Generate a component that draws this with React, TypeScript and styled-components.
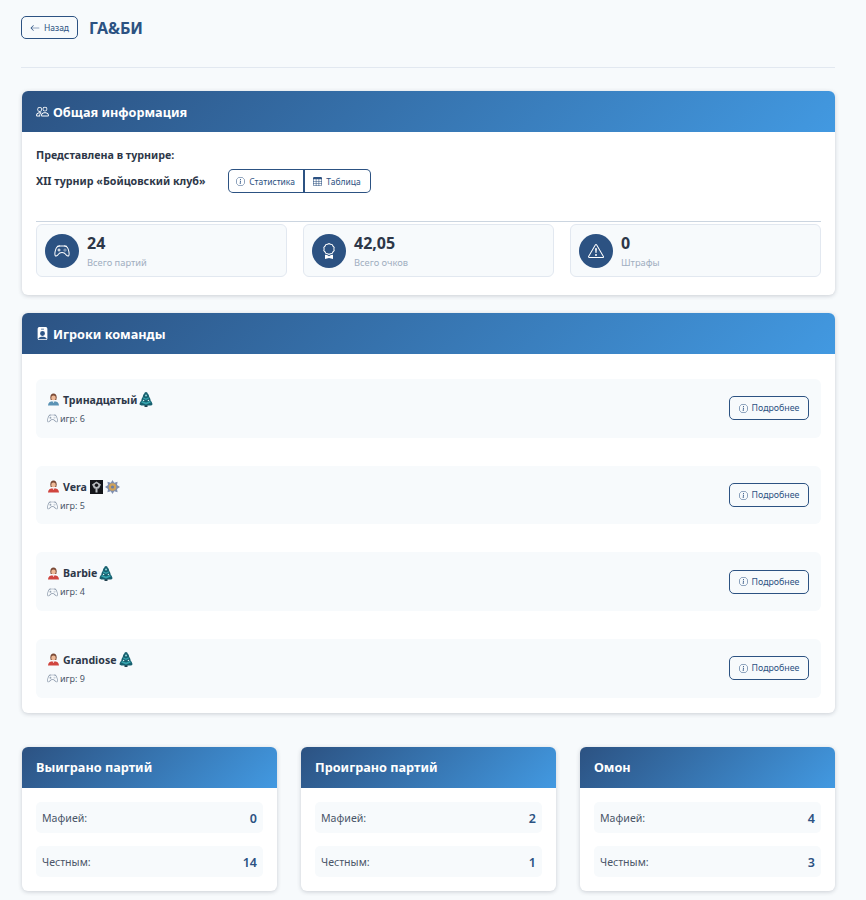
import styled, { createGlobalStyle } from 'styled-components';
import {
  BsArrowLeft,
  BsAward,
  BsController,
  BsExclamationTriangle,
  BsInfoCircle,
  BsPeople,
  BsPersonBadgeFill,
  BsTable,
} from 'react-icons/bs';

const GlobalStyle = createGlobalStyle`
  html, body {
    margin: 0;
    background: #f7fafc;
  }

  body {
    font-family: "Noto Sans", "Open Sans", sans-serif;
    color: #2d3748;
  }

  * {
    box-sizing: border-box;
  }
`;

const Page = styled.div`
  width: 866px;
  height: 900px;
  overflow: hidden;
  padding: 16px 31px 0 21px;
`;

const TopBar = styled.header`
  display: flex;
  align-items: flex-start;
  gap: 11px;
  height: 52px;
  border-bottom: 1px solid #e2e8f0;
  margin-bottom: 23px;
`;

const BackButton = styled.button`
  display: flex;
  align-items: center;
  justify-content: center;
  gap: 4px;
  width: 57px;
  height: 23px;
  padding: 0;
  font: inherit;
  font-size: 8.5px;
  color: #2c5282;
  background: transparent;
  border: 1px solid #2c5282;
  border-radius: 5px;
`;

const Title = styled.h1`
  margin: 0;
  padding-top: 1px;
  font-size: 16px;
  line-height: 23px;
  font-weight: 700;
  color: #2c5282;
`;

const Card = styled.section<{ $gap?: number }>`
  margin-left: 1px;
  margin-bottom: ${(p) => p.$gap ?? 0}px;
  background: #fff;
  border-radius: 6px;
  box-shadow: 0 1px 4px rgba(45, 55, 72, 0.22);
  overflow: hidden;
`;

const CardHeader = styled.h2`
  display: flex;
  align-items: center;
  gap: 4px;
  height: 41px;
  margin: 0;
  padding: 0 14px;
  font-size: 12.7px;
  font-weight: 700;
  color: #fff;
  background: linear-gradient(135deg, #2c5282, #4299e1);
`;

const InfoBody = styled.div`
  padding: 16px 14px 18px;
`;

const BoldLine = styled.div`
  font-size: 10.7px;
  line-height: 15px;
  font-weight: 700;
`;

const TournamentRow = styled.div`
  display: flex;
  align-items: center;
  gap: 22px;
  margin-top: 6px;
  padding-bottom: 28px;
  border-bottom: 1px solid #cbd5e0;
`;

const ButtonGroup = styled.div`
  display: flex;
`;

const GroupButton = styled.button<{ $first?: boolean }>`
  display: flex;
  align-items: center;
  justify-content: center;
  gap: 4px;
  width: ${(p) => (p.$first ? 77 : 66)}px;
  height: 24px;
  padding: 0;
  font: inherit;
  font-size: 8.5px;
  color: #2c5282;
  background: transparent;
  border: 1px solid #2c5282;
  border-left-width: ${(p) => (p.$first ? 1 : 0)}px;
  border-right-width: ${(p) => (p.$first ? 2 : 1)}px;
  border-radius: ${(p) => (p.$first ? '5px 0 0 5px' : '0 5px 5px 0')};
`;

const StatGrid = styled.div`
  display: grid;
  grid-template-columns: repeat(3, 251px);
  gap: 16px;
  margin-top: 2px;
`;

const StatCard = styled.div`
  display: flex;
  align-items: center;
  gap: 8px;
  height: 53px;
  padding: 0 8px;
  background: #f7fafc;
  border: 1px solid #e2e8f0;
  border-radius: 6px;
`;

const StatIcon = styled.div`
  display: flex;
  align-items: center;
  justify-content: center;
  width: 34px;
  height: 34px;
  color: #fff;
  background: #2c5282;
  border-radius: 50%;
`;

const StatValue = styled.div`
  font-size: 16px;
  line-height: 20px;
  font-weight: 700;
  color: #2d3748;
`;

const StatLabel = styled.div`
  font-size: 9.3px;
  line-height: 13px;
  margin-top: 3px;
  color: #a0aec0;
`;

const PlayersBody = styled.div`
  display: flex;
  flex-direction: column;
  gap: 28px;
  padding: 25px 14px 15px;
`;

const PlayerRow = styled.div`
  display: flex;
  align-items: center;
  justify-content: space-between;
  height: 58.7px;
  padding: 0 12px 0 11px;
  background: #f7fafc;
  border-radius: 6px;
`;

const PlayerName = styled.div`
  display: flex;
  align-items: center;
  gap: 2px;
  height: 16px;
  font-size: 10.6px;
  font-weight: 700;
  color: #2d3748;
`;

const PlayerGames = styled.div`
  display: flex;
  align-items: center;
  gap: 2px;
  margin-top: 5px;
  font-size: 9px;
  line-height: 12px;
  color: #4a5568;

  svg {
    color: #8795a8;
  }
`;

const DetailsButton = styled.button`
  display: flex;
  align-items: center;
  justify-content: center;
  gap: 4px;
  width: 80px;
  height: 24px;
  padding: 0;
  font: inherit;
  font-size: 8.8px;
  color: #2c5282;
  background: transparent;
  border: 1px solid #2c5282;
  border-radius: 5px;
`;

const BottomGrid = styled.div`
  display: grid;
  grid-template-columns: repeat(3, 255px);
  gap: 24px;
  margin: 34px 0 0 1px;
`;

const BottomCard = styled(Card)`
  margin: 0;
  height: 144px;
`;

const ScoreBody = styled.div`
  display: flex;
  flex-direction: column;
  gap: 13px;
  padding: 14px;
`;

const ScoreRow = styled.div`
  display: flex;
  align-items: center;
  justify-content: space-between;
  height: 31px;
  padding: 2px 6px 0;
  background: #f7fafc;
  border-radius: 5px;
  font-size: 10.6px;
  color: #4a5568;
`;

const ScoreValue = styled.span`
  font-size: 12.5px;
  font-weight: 600;
  color: #2c5282;
`;

const PersonSvg = styled.svg`
  margin-right: 1px;
`;

const DarkSvg = styled.svg`
  margin-left: 1px;
`;

function Tree() {
  return (
    <svg width="14" height="15" viewBox="0 0 14 15">
      <rect x="5.5" y="12.8" width="3" height="2.2" fill="#24414f" />
      <path
        d="M7 0C8 0 8.600.8 8.600 1.600 9.800 2.600 10.200 4 10.200 5 11.200 6 11.600 7.400 11.600 8.400 12.800 9.600 13.400 11 13.400 12.200 13.400 13 12.600 13.400 12 13.400H2C1.400 13.400.6 13 .6 12.200.6 11 1.200 9.600 2.400 8.400 2.400 7.400 2.800 6 3.800 5 3.800 4 4.200 2.600 5.400 1.600 5.400.8 6 0 7 0Z"
        fill="#17606f"
      />
      <path d="M4.500 5.200 7 6.400 9.500 5.200 9.900 6.600 7 8 4.100 6.600ZM3 9 7 10.600 11 9 11.800 10.600 7 12.400 2.200 10.600Z" fill="#35a3ad" />
      <circle cx="7" cy="3.400" r="1" fill="#8fd5da" />
      <circle cx="4.600" cy="8.400" r=".7" fill="#d8f1f2" />
      <circle cx="9.400" cy="8.400" r=".7" fill="#d8f1f2" />
    </svg>
  );
}

function Person({ color }: { color: string }) {
  return (
    <PersonSvg width="13" height="13" viewBox="0 0 13 13">
      <path d="M1 12.500C1 9.600 2.800 8.200 6.500 8.200S12 9.600 12 12.500Z" fill={color} />
      <path d="M3.300 4.600C3.300 1.800 4.600.6 6.500.6S9.700 1.800 9.700 4.600L9.300 7H3.700Z" fill="#7a4a36" />
      <circle cx="6.500" cy="4.900" r="2.300" fill="#eeb997" />
      <path d="M5.400 8.200 6.500 10 7.600 8.200Z" fill="#fff" />
    </PersonSvg>
  );
}

function DarkBadge() {
  return (
    <DarkSvg width="13" height="14" viewBox="0 0 13 14">
      <rect width="13" height="14" fill="#14161a" />
      <path d="M6.500 1.500 11 4.500 9 8.500H7.500V12.500H5.500V8.500H4L2 4.500Z" fill="#b4b8bc" />
      <circle cx="6.500" cy="5.200" r="1.700" fill="#14161a" />
    </DarkSvg>
  );
}

function StarBadge() {
  return (
    <svg width="15" height="14" viewBox="0 0 15 14">
      <path
        d="M7.500 0 9.200 2.800 12.600 1.800 12 5 15 7 12 9 12.600 12.200 9.200 11.200 7.500 14 5.800 11.200 2.400 12.200 3 9 0 7 3 5 2.400 1.800 5.800 2.800Z"
        fill="#7f8fb0"
      />
      <circle cx="7.500" cy="7" r="3.800" fill="#cfa25a" />
      <circle cx="7.500" cy="7" r="1.600" fill="#6c7da3" />
    </svg>
  );
}

const players = [
  { name: 'Тринадцатый', color: '#5b93b5', games: 6, badges: [<Tree key="t" />] },
  { name: 'Vera', color: '#d0453f', games: 5, badges: [<DarkBadge key="d" />, <StarBadge key="s" />] },
  { name: 'Barbie', color: '#d0453f', games: 4, badges: [<Tree key="t" />] },
  { name: 'Grandiose', color: '#d0453f', games: 9, badges: [<Tree key="t" />] },
];

const stats = [
  { value: '24', label: 'Всего партий', icon: <BsController size={16} /> },
  { value: '42,05', label: 'Всего очков', icon: <BsAward size={16} /> },
  { value: '0', label: 'Штрафы', icon: <BsExclamationTriangle size={16} /> },
];

const scores = [
  { title: 'Выиграно партий', mafia: 0, honest: 14 },
  { title: 'Проиграно партий', mafia: 2, honest: 1 },
  { title: 'Омон', mafia: 4, honest: 3 },
];

export default function App() {
  return (
    <Page>
      <GlobalStyle />
      <TopBar>
        <BackButton>
          <BsArrowLeft size={10} />
          Назад
        </BackButton>
        <Title>ГА&amp;БИ</Title>
      </TopBar>

      <Card $gap={18}>
        <CardHeader>
          <BsPeople size={13} />
          Общая информация
        </CardHeader>
        <InfoBody>
          <BoldLine>Представлена в турнире:</BoldLine>
          <TournamentRow>
            <BoldLine>XII турнир «Бойцовский клуб»</BoldLine>
            <ButtonGroup>
              <GroupButton $first>
                <BsInfoCircle size={9} />
                Статистика
              </GroupButton>
              <GroupButton>
                <BsTable size={9} />
                Таблица
              </GroupButton>
            </ButtonGroup>
          </TournamentRow>
          <StatGrid>
            {stats.map((s) => (
              <StatCard key={s.label}>
                <StatIcon>{s.icon}</StatIcon>
                <div>
                  <StatValue>{s.value}</StatValue>
                  <StatLabel>{s.label}</StatLabel>
                </div>
              </StatCard>
            ))}
          </StatGrid>
        </InfoBody>
      </Card>

      <Card>
        <CardHeader>
          <BsPersonBadgeFill size={13} />
          Игроки команды
        </CardHeader>
        <PlayersBody>
          {players.map((p) => (
            <PlayerRow key={p.name}>
              <div>
                <PlayerName>
                  <Person color={p.color} />
                  {p.name}
                  {p.badges}
                </PlayerName>
                <PlayerGames>
                  <BsController size={11} />
                  игр: {p.games}
                </PlayerGames>
              </div>
              <DetailsButton>
                <BsInfoCircle size={9} />
                Подробнее
              </DetailsButton>
            </PlayerRow>
          ))}
        </PlayersBody>
      </Card>

      <BottomGrid>
        {scores.map((s) => (
          <BottomCard key={s.title}>
            <CardHeader>{s.title}</CardHeader>
            <ScoreBody>
              <ScoreRow>
                Мафией:
                <ScoreValue>{s.mafia}</ScoreValue>
              </ScoreRow>
              <ScoreRow>
                Честным:
                <ScoreValue>{s.honest}</ScoreValue>
              </ScoreRow>
            </ScoreBody>
          </BottomCard>
        ))}
      </BottomGrid>
    </Page>
  );
}
